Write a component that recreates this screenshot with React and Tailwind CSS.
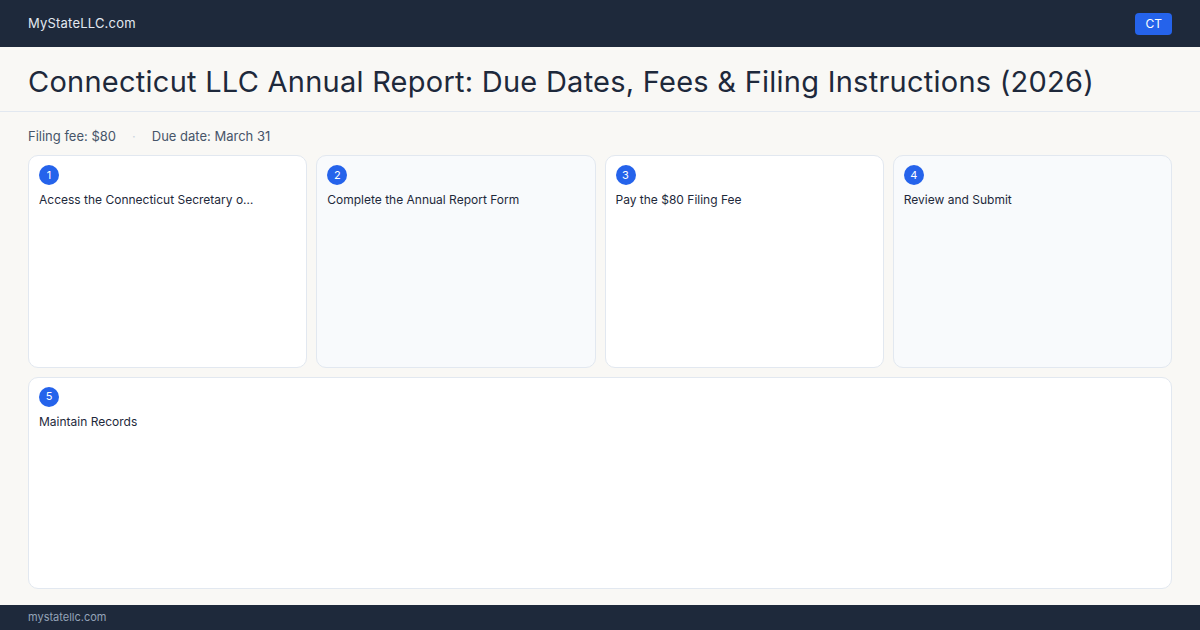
const steps = [
  { n: 1, title: "Access the Connecticut Secretary of the State's Business Portal", alt: false },
  { n: 2, title: "Complete the Annual Report Form", alt: true },
  { n: 3, title: "Pay the $80 Filing Fee", alt: false },
  { n: 4, title: "Review and Submit", alt: true },
];

const StepCard = ({ step, className = "" }) => (
  <div
    className={`rounded-[10px] border border-[#e2e8f0] px-[10px] pt-[9px] ${
      step.alt ? "bg-[#f8fafc]" : "bg-white"
    } ${className}`}
  >
    <div className="w-5 h-5 rounded-full bg-[#2563eb] text-white text-[11px] flex items-center justify-center">
      {step.n}
    </div>
    <div className="mt-[7px] max-w-[216px] text-[12px] leading-[16px] text-[#1e293b] truncate">
      {step.title}
    </div>
  </div>
);

const App = () => {
  return (
    <div
      className="w-[1200px] h-[630px] flex flex-col bg-[#f9f8f5] overflow-hidden"
      style={{ fontFamily: "Inter, 'Noto Sans', sans-serif" }}
    >
      {/* Header */}
      <div className="h-[47px] shrink-0 bg-[#1e293b] flex items-center justify-between px-[28px]">
        <span className="text-[13px] text-[#e2e8f0] tracking-[0.2px]">MyStateLLC.com</span>
        <span className="bg-[#2563eb] text-white text-[12px] rounded-[4px] px-[10px] h-[22px] flex items-center">
          CT
        </span>
      </div>

      {/* Title */}
      <div className="h-[65px] shrink-0 border-b border-[#e2e8f0] px-[28px] pt-[5px] flex items-center">
        <h1 className="text-[29px] text-[#1e293b] tracking-[0.25px] leading-none">
          Connecticut LLC Annual Report: Due Dates, Fees &amp; Filing Instructions (2026)
        </h1>
      </div>

      {/* Meta */}
      <div className="px-[28px] pt-[6px] h-[43px] shrink-0 flex items-center gap-[16px] text-[13px] text-[#475569]">
        <span>Filing fee: $80</span>
        <span className="text-[#cbd5e1]">·</span>
        <span>Due date: March 31</span>
      </div>

      {/* Steps */}
      <div className="flex-1 px-[28px] pb-[16px] grid grid-cols-4 grid-rows-2 gap-[9px]">
        {steps.map((s) => (
          <StepCard key={s.n} step={s} />
        ))}
        <StepCard step={{ n: 5, title: "Maintain Records", alt: false }} className="col-span-4" />
      </div>

      {/* Footer */}
      <div className="h-[25px] shrink-0 bg-[#1e293b] px-[28px] flex items-center">
        <span className="text-[11px] text-[#94a3b8]">mystatellc.com</span>
      </div>
    </div>
  );
};

export default App;
